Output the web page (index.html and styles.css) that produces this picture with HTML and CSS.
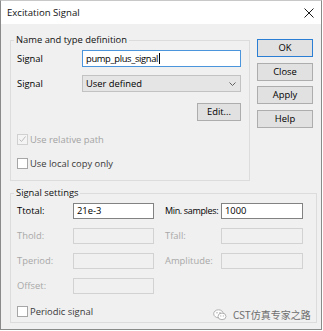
FILE: index.html
```html
<!DOCTYPE html>
<html lang="en">
<head>
    <meta charset="UTF-8">
    <title>Excitation Signal</title>
    <link rel="stylesheet" href="styles.css">
</head>
<body>

<div class="window">
    <!-- title bar -->
    <div class="titlebar">
        <span class="title">Excitation Signal</span>
        <svg class="close-x" width="10" height="10" viewBox="0 0 10 10">
            <path d="M0.5 0.5 L9.5 9.5 M9.5 0.5 L0.5 9.5" stroke="#1a1a1a" stroke-width="1" fill="none"/>
        </svg>
    </div>

    <div class="client">
        <div class="top">
            <!-- name and type -->
            <fieldset class="group group-name">
                <legend>Name and type definition</legend>
                <div class="row row-first">
                    <span class="label">Signal</span>
                    <div class="textbox focused">pump_plus_signal<span class="caret"></span></div>
                </div>
                <div class="row row-combo">
                    <span class="label">Signal</span>
                    <div class="combo">
                        <span>User defined</span>
                        <svg width="7" height="4" viewBox="0 0 7 4">
                            <path d="M0.5 0.5 L3.5 3.5 L6.5 0.5" stroke="#606060" fill="none"/>
                        </svg>
                    </div>
                </div>
                <div class="row row-edit">
                    <button class="btn btn-edit">Edit...</button>
                </div>
                <div class="check check-first disabled">
                    <span class="box">
                        <svg width="9" height="9" viewBox="0 0 9 9">
                            <path d="M1.5 4.5 L3.5 6.5 L7.5 1.5" stroke="#bdbdbd" stroke-width="1" fill="none"/>
                        </svg>
                    </span>
                    <span>Use relative path</span>
                </div>
                <div class="check check-second">
                    <span class="box"></span>
                    <span>Use local copy only</span>
                </div>
            </fieldset>

            <!-- dialog buttons -->
            <div class="buttons">
                <button class="btn btn-default">OK</button>
                <button class="btn">Close</button>
                <button class="btn">Apply</button>
                <button class="btn">Help</button>
            </div>
        </div>

        <!-- signal settings -->
        <fieldset class="group group-settings">
            <legend>Signal settings</legend>
            <div class="grid">
                <span class="label">Ttotal:</span>
                <div class="field">21e-3</div>
                <span class="label col-right">Min. samples:</span>
                <div class="field">1000</div>

                <span class="label disabled">Thold:</span>
                <div class="field disabled"></div>
                <span class="label col-right disabled">Tfall:</span>
                <div class="field disabled"></div>

                <span class="label disabled">Tperiod:</span>
                <div class="field disabled"></div>
                <span class="label col-right disabled">Amplitude:</span>
                <div class="field disabled"></div>

                <span class="label disabled">Offset:</span>
                <div class="field disabled"></div>
            </div>
            <div class="check check-periodic">
                <span class="box"></span>
                <span>Periodic signal</span>
            </div>
        </fieldset>
    </div>

    <!-- watermark over the bottom corner -->
    <div class="watermark">
        <svg width="14" height="12" viewBox="0 0 14 12">
            <ellipse cx="5.5" cy="4.8" rx="4.8" ry="4" fill="#fff" stroke="#a8a8a8" stroke-width="0.9"/>
            <ellipse cx="9" cy="7.4" rx="4" ry="3.3" fill="#fff" stroke="#a8a8a8" stroke-width="0.9"/>
            <circle cx="4" cy="3.8" r="0.7" fill="#a8a8a8"/>
            <circle cx="7" cy="3.8" r="0.7" fill="#a8a8a8"/>
            <circle cx="7.8" cy="6.9" r="0.55" fill="#a8a8a8"/>
            <circle cx="10.3" cy="6.9" r="0.55" fill="#a8a8a8"/>
        </svg>
        <span>CST仿真专家之路</span>
    </div>
</div>

</body>
</html>
```

FILE: styles.css
```css
/* page */
body {
    margin: 0;
    background-color: #ffffff;
    font-family: "Open Sans", "Noto Sans", sans-serif;
    font-size: 9.4px;
    color: #000;
}

/* window frame */
.window {
    position: relative;
    width: 322px;
    height: 330px;
    box-sizing: border-box;
    border: 1px solid #8a8a8a;
    border-top-color: #c8c8c8;
    display: flex;
    flex-direction: column;
}

.titlebar {
    height: 23px;
    background-color: #fff;
    display: flex;
    align-items: center;
    justify-content: space-between;
    padding: 0 7px 0 6px;
}

.title {
    font-size: 9.6px;
    color: #111;
}

.close-x {
    margin-top: 1px;
}

/* dialog body */
.client {
    flex: 1;
    background-color: #f0f0f0;
    padding: 9px 4px 0 9px;
}

.top {
    display: flex;
    gap: 7px;
}

/* group boxes */
.group {
    margin: 0;
    border: 1px solid #dcdcdc;
    box-sizing: border-box;
    min-width: 0;
}

.group legend {
    padding: 0 2px;
    margin-left: -3px;
    line-height: 14px;
    color: #111;
}

.group-name {
    width: 240px;
    padding: 3px 8px 11px 6px;
    display: flex;
    flex-direction: column;
}

.group-settings {
    width: 307px;
    margin-top: 5px;
    padding: 3px 6px 5px 6px;
}

/* rows */
.row {
    display: flex;
    align-items: center;
}

.row-combo {
    margin-top: 8px;
}

.row-edit {
    margin-top: 11px;
    justify-content: flex-end;
}

.label {
    width: 65px;
    line-height: 12px;
    white-space: nowrap;
}

.textbox {
    width: 159px;
    height: 17px;
    box-sizing: border-box;
    border: 1px solid #7a7a7a;
    background: #fff;
    padding: 0 3px;
    line-height: 15px;
    letter-spacing: -0.35px;
    display: flex;
    align-items: center;
}

.textbox.focused {
    border-color: #4a95dc;
}

.caret {
    display: inline-block;
    width: 1px;
    height: 11px;
    background: #000;
    margin-left: 1px;
}

.combo {
    width: 159px;
    height: 17px;
    box-sizing: border-box;
    border: 1px solid #c2c2c2;
    background: #e5e5e5;
    padding: 0 4px 0 3px;
    display: flex;
    align-items: center;
    justify-content: space-between;
}

/* buttons */
.btn {
    font: inherit;
    color: #000;
    background: #e1e1e1;
    border: 1px solid #adadad;
    padding: 0;
    height: 18px;
    box-sizing: border-box;
    line-height: 14px;
}

.btn-edit {
    width: 44px;
}

.buttons {
    display: flex;
    flex-direction: column;
    gap: 5.6px;
    margin-top: 6px;
}

.buttons .btn {
    width: 56px;
}

.btn-default {
    border-color: #2a7fd4;
}

/* check boxes */
.check {
    display: flex;
    align-items: center;
    height: 11px;
    gap: 2px;
    line-height: 11px;
    color: #3a3a3a;
}

.check-first {
    margin-top: 13px;
}

.check-second {
    margin-top: 13px;
}

.check-periodic {
    margin-top: 12px;
}

.check .box {
    width: 11px;
    height: 11px;
    box-sizing: border-box;
    border: 1px solid #a6a6a6;
    background: #fff;
    display: flex;
    align-items: center;
    justify-content: center;
}

.check.disabled {
    color: #a3a3a3;
}

.check.disabled .box {
    border-color: #d0d0d0;
    background: #f4f4f4;
}

/* settings grid */
.grid {
    display: grid;
    grid-template-columns: 56px 81px 67px 82px;
    grid-auto-rows: 16px;
    row-gap: 9px;
    align-items: center;
}

.grid .label {
    width: auto;
}

.grid .col-right {
    padding-left: 11px;
}

.grid .col-right:not(.disabled) {
    font-size: 9px;
    letter-spacing: -0.35px;
}

.field {
    height: 16px;
    box-sizing: border-box;
    border: 1px solid #828282;
    background: #fff;
    padding: 0 3px;
    line-height: 14px;
}

.label.disabled {
    color: #a8a8a8;
}

.field.disabled {
    border-color: #d2d2d2;
    background: #f0f0f0;
}

/* watermark */
.watermark {
    position: absolute;
    left: 212px;
    top: 306px;
    display: flex;
    align-items: center;
    gap: 6px;
    white-space: nowrap;
    font-family: "Noto Sans CJK SC", sans-serif;
    font-size: 10px;
    color: #6e6e6e;
}
```
